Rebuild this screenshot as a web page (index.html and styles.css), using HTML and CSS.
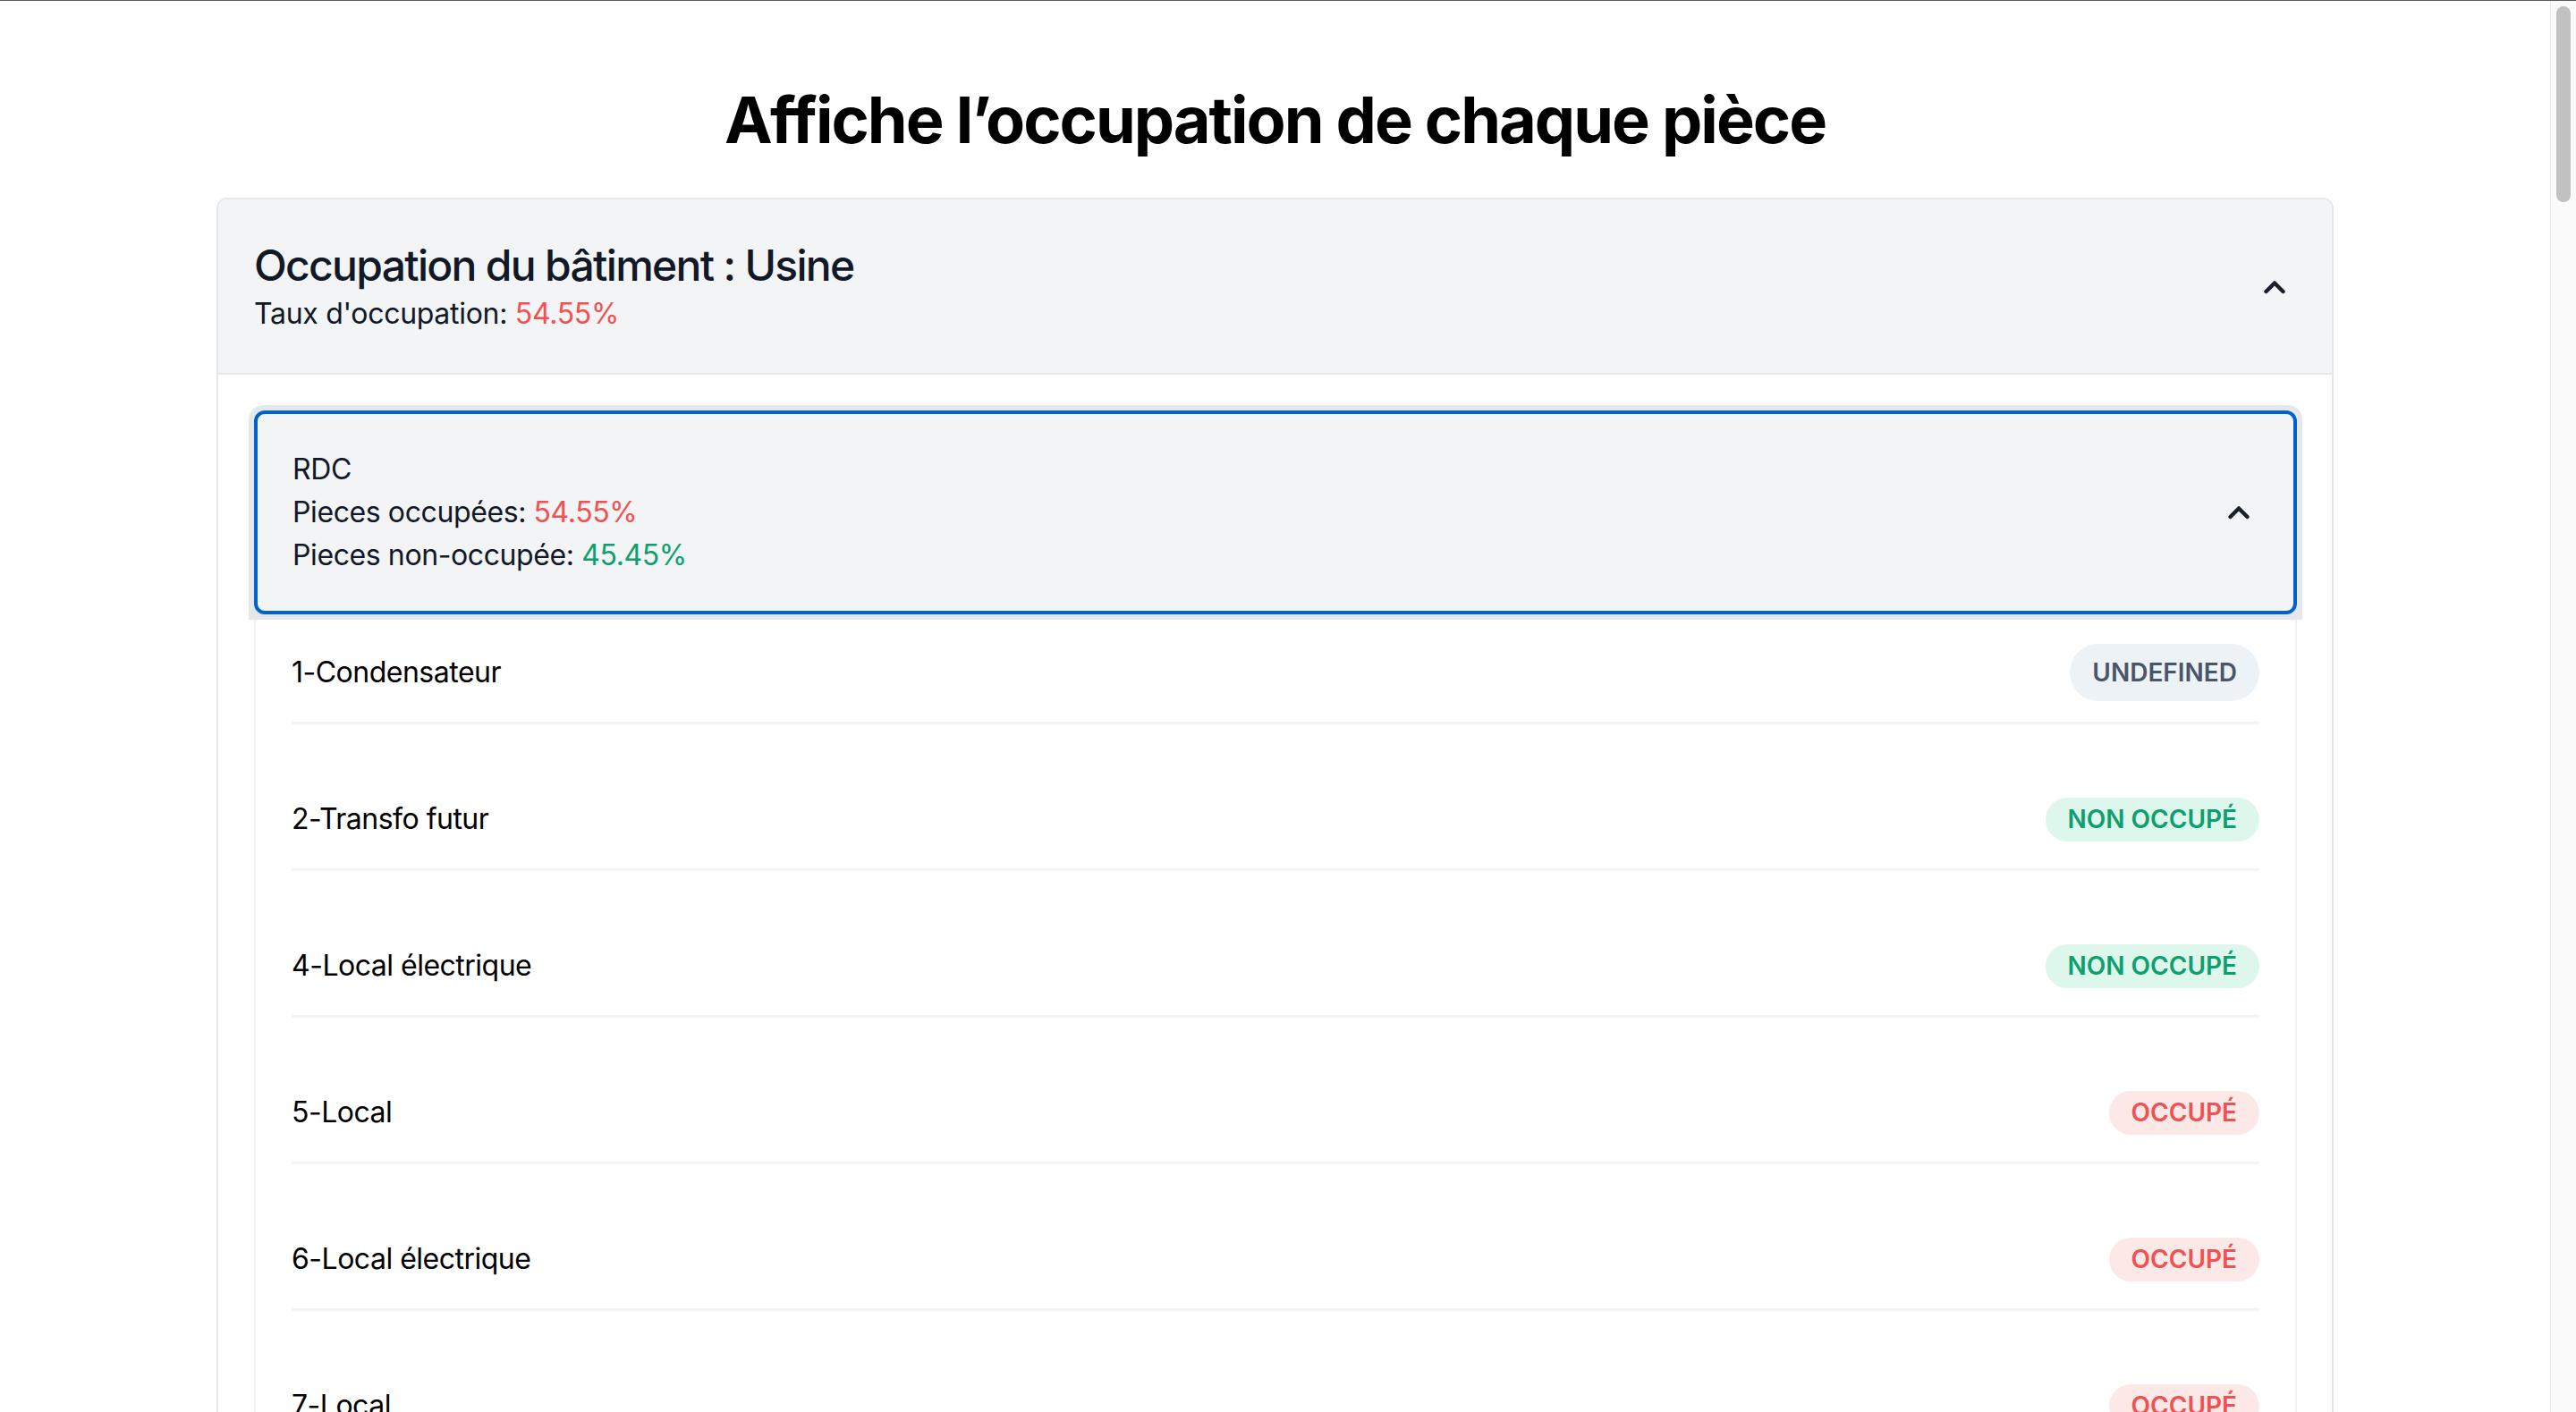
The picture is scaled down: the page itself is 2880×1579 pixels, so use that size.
FILE: index.html
```html
<!DOCTYPE html>
<html lang="fr">
<head>
<meta charset="utf-8">
<title>Occupation</title>
<link rel="stylesheet" href="styles.css">
</head>
<body>
<div class="app">
  <main class="page">
    <h1 class="page-title">Affiche l’occupation de chaque pièce</h1>
    <section class="card">
      <div class="card-head">
        <div class="card-head-text">
          <h2 class="building">Occupation du bâtiment : Usine</h2>
          <p class="rate">Taux d'occupation: <span class="red">54.55%</span></p>
        </div>
        <svg class="chev" width="40" height="40" viewBox="0 0 40 40"><path d="M10.5 25 L20 15.5 L29.5 25"/></svg>
      </div>
      <div class="card-body">
        <div class="floor-head">
          <div class="floor-btn">
            <div class="floor-text">
              <p>RDC</p>
              <p>Pieces occupées: <span class="red">54.55%</span></p>
              <p>Pieces non-occupée: <span class="green">45.45%</span></p>
            </div>
            <svg class="chev" width="40" height="40" viewBox="0 0 40 40"><path d="M10.5 25 L20 15.5 L29.5 25"/></svg>
          </div>
        </div>
        <div class="floor-panel">
          <div class="room"><span>1-Condensateur</span><span class="badge badge-undef">UNDEFINED</span></div>
          <div class="room"><span>2-Transfo futur</span><span class="badge badge-free">NON OCCUPÉ</span></div>
          <div class="room"><span>4-Local électrique</span><span class="badge badge-free">NON OCCUPÉ</span></div>
          <div class="room"><span>5-Local</span><span class="badge badge-busy">OCCUPÉ</span></div>
          <div class="room"><span>6-Local électrique</span><span class="badge badge-busy">OCCUPÉ</span></div>
          <div class="room"><span>7-Local</span><span class="badge badge-busy">OCCUPÉ</span></div>
          <div class="room"><span>8-Local</span><span class="badge badge-busy">OCCUPÉ</span></div>
          <div class="room"><span>9-Local</span><span class="badge badge-free">NON OCCUPÉ</span></div>
        </div>
      </div>
    </section>
  </main>
  <div class="scrollbar"><div class="thumb"></div></div>
</div>
</body>
</html>
```

FILE: styles.css
```css
html, body {
  margin: 0;
  padding: 0;
  overflow: hidden;
  background: #ffffff;
}

body {
  font-family: Inter, "Noto Sans", "Liberation Sans", sans-serif;
  color: #111827;
}

.app {
  display: flex;
  height: 1579px;
  box-sizing: border-box;
  border-top: 1px solid #5b5b5b;
  overflow: hidden;
}

.page {
  flex: 1;
  min-width: 0;
  padding-top: 90px;
  overflow: hidden;
}

.page-title {
  margin: 0 0 44px;
  text-align: center;
  font-size: 72px;
  line-height: 86px;
  font-weight: 700;
  color: #000000;
  letter-spacing: -2px;
}

.card {
  width: 2367px;
  margin: 0 auto;
  box-sizing: border-box;
  border: 2px solid #e5e7eb;
  border-bottom: none;
  border-radius: 12px 12px 0 0;
}

.card-head {
  display: flex;
  align-items: center;
  justify-content: space-between;
  padding: 43px 44px 42px 40px;
  background: #f3f4f6;
  border-bottom: 2px solid #e5e7eb;
  border-radius: 10px 10px 0 0;
}

.building {
  margin: 0;
  font-size: 48px;
  line-height: 61px;
  font-weight: 500;
  color: #111827;
  letter-spacing: -1.7px;
}

.rate {
  margin: 0;
  font-size: 32px;
  line-height: 48px;
  font-weight: 400;
  color: #111827;
  letter-spacing: -0.3px;
}

.red { color: #f05252; }
.green { color: #0e9f6e; }

.chev {
  display: block;
  flex: none;
  fill: none;
  stroke: #1a202c;
  stroke-width: 4.5;
  stroke-linecap: round;
  stroke-linejoin: round;
}

.card-body {
  padding: 34px 33px 0 34px;
}

.floor-head {
  padding: 6px;
  background: #e5e7eb;
  border-radius: 16px 16px 0 0;
}

.floor-btn {
  display: flex;
  align-items: center;
  justify-content: space-between;
  padding: 38px 41px 38px 39px;
  background: #f3f4f6;
  border: 4px solid #0062d1;
  border-radius: 12px;
}

.floor-text p {
  margin: 0;
  font-size: 32px;
  line-height: 48px;
  color: #111827;
  letter-spacing: -0.4px;
}

.floor-panel {
  margin: 0 6px;
  padding: 4px 40px 0;
  border-left: 2px solid #f0f1f3;
  border-right: 2px solid #f0f1f3;
}

.room {
  display: flex;
  align-items: center;
  justify-content: space-between;
  height: 110px;
  border-bottom: 3px solid #f3f4f6;
  font-size: 32px;
  line-height: 48px;
  color: #000000;
  letter-spacing: -0.5px;
}

.room + .room {
  margin-top: 51px;
}

.badge {
  display: inline-block;
  padding: 0 25px;
  height: 49px;
  line-height: 49px;
  border-radius: 999px;
  font-size: 28px;
  font-weight: 600;
  letter-spacing: 0;
  text-transform: uppercase;
}

.badge-undef {
  height: 64px;
  line-height: 64px;
  background: #edf2f7;
  color: #4a5568;
}

.badge-free {
  background: #def7ec;
  color: #0e9f6e;
}

.badge-busy {
  background: #fde8e8;
  color: #f05252;
}

.scrollbar {
  flex: none;
  width: 29px;
  box-sizing: border-box;
  background: #fafafa;
  border-left: 1px solid #e8e8e8;
  padding: 6px 6px 0 6px;
}

.thumb {
  width: 16px;
  height: 219px;
  background: #c1c1c1;
  border-radius: 8px;
}
```
